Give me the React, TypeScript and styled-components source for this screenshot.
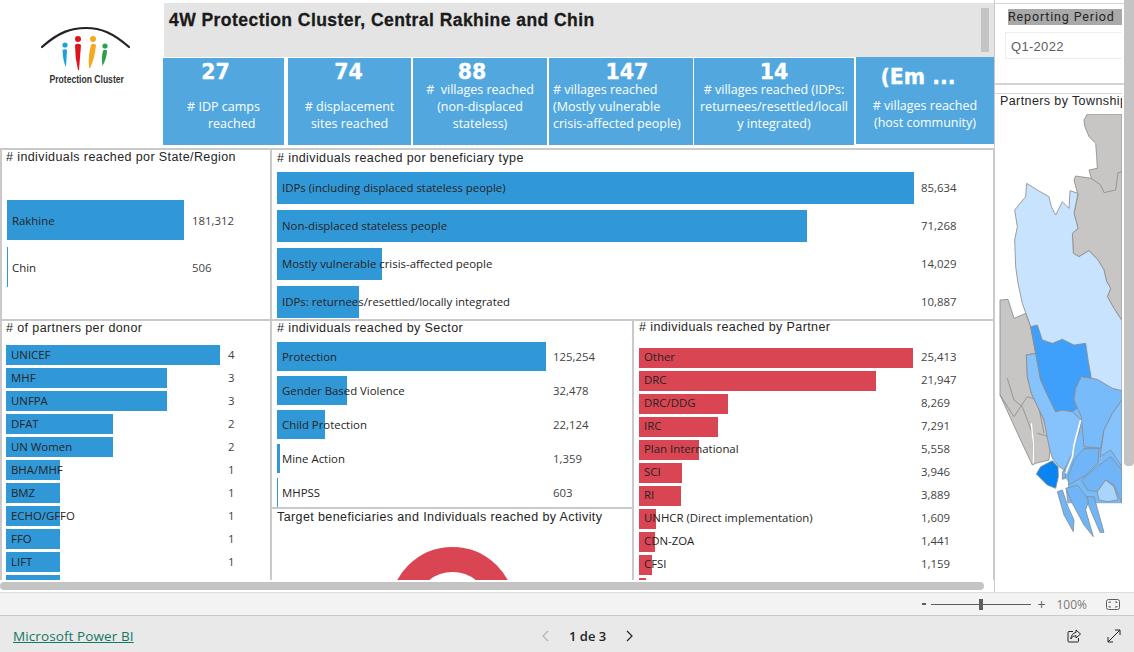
import styled, { createGlobalStyle } from 'styled-components'

const GlobalStyle = createGlobalStyle`
  html, body {
    margin: 0;
    padding: 0;
    background: #fff;
    overflow: hidden;
  }
`

const kpis = [
  { value: '27', label: '# IDP camps\n     reached', width: 121, gap: 0, shift: -8, drop: 0, left: false },
  { value: '74', label: '# displacement\nsites reached', width: 123, gap: 4, shift: -1, drop: 0, left: false },
  { value: '88', label: '#  villages reached\n(non-displaced\nstateless)', width: 134, gap: 2, shift: -8, drop: 0, left: false },
  { value: '147', label: '# villages reached\n(Mostly vulnerable\ncrisis-affected people)', width: 144, gap: 2, shift: 6, drop: 0, left: true },
  { value: '14', label: '# villages reached (IDPs:\nreturnees/resettled/locall\ny integrated)', width: 160, gap: 1, shift: 0, drop: 0, left: false },
  { value: '(Em ...', label: '# villages reached\n(host community)', width: 138, gap: 2, shift: -7, drop: 6, left: false },
]

const regionRows = [
  { name: 'Rakhine', value: '181,312', pct: 177 },
  { name: 'Chin', value: '506', pct: 1 },
]
const typeRows = [
  { name: 'IDPs (including displaced stateless people)', value: '85,634', pct: 637 },
  { name: 'Non-displaced stateless people', value: '71,268', pct: 530 },
  { name: 'Mostly vulnerable crisis-affected people', value: '14,029', pct: 105 },
  { name: 'IDPs: returnees/resettled/locally integrated', value: '10,887', pct: 82 },
]
const donorRows = [
  { name: 'UNICEF', value: '4', pct: 214 },
  { name: 'MHF', value: '3', pct: 161 },
  { name: 'UNFPA', value: '3', pct: 161 },
  { name: 'DFAT', value: '2', pct: 107 },
  { name: 'UN Women', value: '2', pct: 107 },
  { name: 'BHA/MHF', value: '1', pct: 54 },
  { name: 'BMZ', value: '1', pct: 54 },
  { name: 'ECHO/GFFO', value: '1', pct: 54 },
  { name: 'FFO', value: '1', pct: 54 },
  { name: 'LIFT', value: '1', pct: 54 },
  { name: '', value: '', pct: 54 },
]
const sectorRows = [
  { name: 'Protection', value: '125,254', pct: 269 },
  { name: 'Gender Based Violence', value: '32,478', pct: 70 },
  { name: 'Child Protection', value: '22,124', pct: 48 },
  { name: 'Mine Action', value: '1,359', pct: 3 },
  { name: 'MHPSS', value: '603', pct: 1 },
]
const partnerRows = [
  { name: 'Other', value: '25,413', pct: 274 },
  { name: 'DRC', value: '21,947', pct: 237 },
  { name: 'DRC/DDG', value: '8,269', pct: 89 },
  { name: 'IRC', value: '7,291', pct: 79 },
  { name: 'Plan International', value: '5,558', pct: 60 },
  { name: 'SCI', value: '3,946', pct: 43 },
  { name: 'RI', value: '3,889', pct: 42 },
  { name: 'UNHCR (Direct implementation)', value: '1,609', pct: 17 },
  { name: 'CDN-ZOA', value: '1,441', pct: 16 },
  { name: 'CFSI', value: '1,159', pct: 13 },
  { name: '', value: '', pct: 7 },
]

type Row = { name: string; value: string; pct: number }

const BarChart = ({
  rows,
  color,
  barHeight,
  gap,
  valueAt,
  lift = 0,
}: {
  rows: Row[]
  color: string
  barHeight: number
  gap: number
  valueAt: number
  lift?: number
}) => (
  <ChartRows $gap={gap}>
    {rows.map((row, i) => (
      <ChartRow key={i} $height={barHeight} $valueAt={valueAt} $lift={lift}>
        <Bar $color={color} style={{ width: row.pct }} />
        <BarLabel>{row.name}</BarLabel>
        <BarValue>{row.value}</BarValue>
      </ChartRow>
    ))}
  </ChartRows>
)

const RakhineMap = () => (
  <MapSvg viewBox="12 42 372 1404">
    <g stroke="#8b8b8b" strokeWidth="2.5" strokeLinejoin="round">
      <path
        fill="#c8c6c4"
        d="M280 42L270 60 272 78 285 110 305 130 308 170 310 205 285 210 292 235 245 228 240 240 252 285 240 340 252 385 235 400 238 460 255 470 285 452 312 480 330 510 338 545 350 565 340 590 360 625 384 662V42Z"
      />
      <path fill="none" d="M292 235L320 255 330 278 365 270 372 218 384 215" />
      <path
        fill="#c7e3fe"
        d="M98 250L130 270 165 290 172 320 185 345 205 305 225 325 228 272 252 280 240 340 252 385 235 400 238 460 255 470 285 452 312 480 330 510 338 545 350 565 340 590 360 625 384 662V880H100L110 680 85 610 72 550 65 500 62 420 70 380 62 330 95 290Z"
      />
      <path
        fill="#c8c6c4"
        d="M18 600L42 598 60 655 95 640 110 680 125 760 97 765 100 830 112 880 150 960 170 1030 165 1080 125 1090 115 1095 75 1010 18 885Z"
      />
      <path fill="none" d="M18 885L60 950 100 890 130 900 150 1000M40 835L60 900 85 920 115 1000 118 1090M130 1000L165 1010" />
      <path fill="#78bbfa" d="M240 900L384 880V1210H222L210 1110Z" />
      <path
        fill="#86c2fb"
        d="M97 765L125 760 140 840 185 935 205 930 235 935 262 960 255 1000 240 1030 235 1060 210 1110 195 1100 175 1075 165 1040 150 960 112 880 100 830Z"
      />
      <path
        fill="#3fa0fb"
        d="M110 680L130 675 145 720 175 730 205 718 240 735 275 730 283 785 292 835 262 830 245 865 240 900 250 925 235 935 205 930 185 935 160 885 140 840 125 760Z"
      />
      <path
        fill="#78bbfa"
        d="M262 830L310 838 355 865 384 872V900L355 940 330 990 320 1045 270 1040 262 950 240 900 245 865Z"
      />
      <path fill="#86c2fb" d="M384 900L355 940 330 990 318 1070 350 1050 384 1100Z" />
      <path fill="#6fb5f8" d="M270 1045L315 1045 312 1090 275 1125 225 1155 222 1130 240 1080Z" />
      <path
        fill="#6fb5f8"
        d="M262 1140L310 1100 350 1070 384 1110V1210L360 1155 335 1140 310 1175 280 1170Z"
      />
      <path fill="#a9d5fd" d="M310 1175L335 1140 360 1160 372 1200 340 1205 315 1200Z" />
    </g>
    <path fill="#fff" d="M195 1130L210 1125 222 1145 222 1170 200 1175 188 1165Z" />
    <path fill="#fff" d="M222 1210H384V1446H222Z" />
    <g stroke="#8b8b8b" strokeWidth="2.5" strokeLinejoin="round">
      <path fill="#6fb5f8" d="M190 1175L205 1170 222 1220 240 1260 238 1295 210 1245Z" />
      <path fill="#6fb5f8" d="M215 1165L250 1155 285 1200 275 1230 298 1310 270 1275 235 1210Z" />
      <path fill="#6fb5f8" d="M280 1190L300 1190 330 1297 318 1297 285 1220Z" />
      <path fill="#6fb5f8" d="M205 1115L215 1110 215 1135 205 1138Z" />
      <path fill="#0a84ef" d="M127 1122L140 1100 175 1082 192 1100 193 1130 185 1165 160 1155Z" />
    </g>
    <path fill="none" stroke="#fff" strokeWidth="5" d="M260 960L240 1035 235 1070 215 1120" />
    <path fill="none" stroke="#fff" strokeWidth="4" d="M112 970L118 1030 118 1090" />
  </MapSvg>
)

const App = () => (
  <>
    <GlobalStyle />
    <Page>
      <Report>
        <MainColumn>
          <Header>
            <LogoBox>
              <svg width="92" height="44" viewBox="0 0 92 44">
                <path d="M1 21C18 6 30 2 45 2S72 7 88 21" fill="none" stroke="#222" strokeWidth="2.2" strokeLinecap="round" />
                <circle cx="24" cy="19" r="2.6" fill="#1da1dc" />
                <path d="M21.500 24Q24 22.500 26 24L25 41Q22 36 21.500 24Z" fill="#1da1dc" />
                <circle cx="37" cy="13" r="3" fill="#e0121b" />
                <path d="M34 19Q37 16.500 40 19L38 44H37Q34 32 34 19Z" fill="#e0121b" />
                <circle cx="52" cy="13" r="3" fill="#f5a922" />
                <path d="M50 19Q53 16.500 55 19Q54 32 49 42H48Q47 30 50 19Z" fill="#f5a922" />
                <circle cx="64" cy="20" r="2.6" fill="#2ba24a" />
                <path d="M62 24.500Q64 23 66 24.500Q66 32 61.500 40Q60 32 62 24.500Z" fill="#2ba24a" />
              </svg>
              <LogoText>Protection Cluster</LogoText>
            </LogoBox>
            <HeaderBody>
              <TitleBar>
                <Title>4W Protection Cluster, Central Rakhine and Chin</Title>
                <TitleScroll />
              </TitleBar>
              <KpiRow>
                {kpis.map((kpi) => (
                  <KpiCard key={kpi.label} $width={kpi.width} $gap={kpi.gap} $lift={kpi.drop > 0}>
                    <KpiValue $shift={kpi.shift} $drop={kpi.drop}>{kpi.value}</KpiValue>
                    <KpiLabel $left={kpi.left}>{kpi.label}</KpiLabel>
                  </KpiCard>
                ))}
              </KpiRow>
            </HeaderBody>
          </Header>
          <Panels>
            <RegionPanel>
              <PanelTitle $top={0} $left={4}>
                # individuals reached por State/Region
              </PanelTitle>
              <RegionChart>
                <BarChart rows={regionRows} color="#3198d8" barHeight={40} gap={7} valueAt={185} />
              </RegionChart>
            </RegionPanel>
            <TypePanel>
              <PanelTitle $top={1} $left={5}># individuals reached por beneficiary type</PanelTitle>
              <TypeChart>
                <BarChart rows={typeRows} color="#3198d8" barHeight={32} gap={6} valueAt={644} lift={2} />
              </TypeChart>
            </TypePanel>
            <DonorPanel>
              <PanelTitle $top={0} $left={4}># of partners per donor</PanelTitle>
              <DonorChart>
                <BarChart rows={donorRows} color="#3198d8" barHeight={20} gap={3} valueAt={222} lift={1} />
              </DonorChart>
            </DonorPanel>
            <SectorPanel>
              <PanelTitle $top={0} $left={5}># individuals reached by Sector</PanelTitle>
              <SectorChart>
                <BarChart rows={sectorRows} color="#3198d8" barHeight={29} gap={5} valueAt={276} />
              </SectorChart>
            </SectorPanel>
            <TargetPanel>
              <PanelTitle $top={1} $left={5}>Target beneficiaries and Individuals reached by Activity</PanelTitle>
              <Donut />
            </TargetPanel>
            <PartnerPanel>
              <PanelTitle $top={-1} $left={5}># individuals reached by Partner</PanelTitle>
              <PartnerChart>
                <BarChart rows={partnerRows} color="#d94553" barHeight={20} gap={3} valueAt={282} lift={3} />
              </PartnerChart>
            </PartnerPanel>
          </Panels>
        </MainColumn>
        <Sidebar>
          <SlicerPanel>
            <SlicerTitle>Reporting Period</SlicerTitle>
            <SlicerBox>Q1-2022</SlicerBox>
          </SlicerPanel>
          <MapPanel>
            <MapTitle>Partners by Township</MapTitle>
            <RakhineMap />
          </MapPanel>
          <SideScroll />
        </Sidebar>
        <BottomScroll />
      </Report>
      <ZoomBar>
        <ZoomMinus />
        <ZoomTrack>
          <ZoomThumb />
        </ZoomTrack>
        <ZoomPlus>+</ZoomPlus>
        <ZoomValue>100%</ZoomValue>
        <svg width="14" height="11" viewBox="0 0 14 11">
          <rect x="0.5" y="0.5" width="13" height="10" rx="2" fill="none" stroke="#605e5c" />
          <path d="M3 4V3H5M9 3H11V4M11 7V8H9M5 8H3V7" fill="none" stroke="#605e5c" />
        </svg>
      </ZoomBar>
      <Footer>
        <BrandLink>Microsoft Power BI</BrandLink>
        <Pager>
          <svg width="10" height="12" viewBox="0 0 10 12">
            <path d="M7 1L2 6L7 11" fill="none" stroke="#b5b3b1" strokeWidth="1.2" />
          </svg>
          <PageText>1 de 3</PageText>
          <svg width="10" height="12" viewBox="0 0 10 12">
            <path d="M3 1L8 6L3 11" fill="none" stroke="#252423" strokeWidth="1.2" />
          </svg>
        </Pager>
        <FooterIcons>
          <svg width="14" height="14" viewBox="0 0 14 14">
            <path d="M6 2.500H2A1 1 0 0 0 1 3.500V12A1 1 0 0 0 2 13H10.500A1 1 0 0 0 11.500 12V9" fill="none" stroke="#252423" />
            <path d="M9 1L13.500 5 9 9V6.800C6.500 6.800 4.800 7.800 3.800 10 4 6.500 6 4 9 3.400Z" fill="none" stroke="#252423" />
          </svg>
          <svg width="14" height="14" viewBox="0 0 14 14">
            <path d="M1 13L13 1M8 1H13V6M1 8V13H6" fill="none" stroke="#252423" />
          </svg>
        </FooterIcons>
      </Footer>
    </Page>
  </>
)

export default App

const Page = styled.div`
  width: 1134px;
  height: 652px;
  display: flex;
  flex-direction: column;
  overflow: hidden;
  font-family: 'Open Sans', 'Noto Sans', sans-serif;
  color: #333;
`

const Report = styled.div`
  position: relative;
  height: 592px;
  display: flex;
  overflow: hidden;
  background: #fff;
`

const MainColumn = styled.div`
  width: 994px;
  height: 580px;
  flex-shrink: 0;
  display: flex;
  flex-direction: column;
  overflow: hidden;
`

const Header = styled.div`
  height: 148px;
  flex-shrink: 0;
  display: flex;
`

const LogoBox = styled.div`
  width: 163px;
  flex-shrink: 0;
  display: flex;
  flex-direction: column;
  align-items: center;
  padding-top: 26px;
  padding-left: 10px;
  box-sizing: border-box;
`

const LogoText = styled.div`
  margin-top: 3px;
  font-family: 'Liberation Sans', Arial, sans-serif;
  font-size: 11px;
  font-weight: 700;
  line-height: 12px;
  color: #333;
  white-space: nowrap;
  transform: scaleX(0.78);
`

const HeaderBody = styled.div`
  flex: 1;
  padding-top: 3px;
  display: flex;
  flex-direction: column;
`

const TitleBar = styled.div`
  height: 54px;
  margin-left: 1px;
  background: #e4e4e4;
  position: relative;
  padding: 7px 5px;
  box-sizing: border-box;
`

const Title = styled.div`
  font-family: 'Liberation Sans', Arial, sans-serif;
  font-size: 17.5px;
  font-weight: 700;
  line-height: 20px;
  color: #1a1a1a;
  letter-spacing: 0.45px;
  -webkit-text-stroke: 0.3px #1a1a1a;
`

const TitleScroll = styled.div`
  position: absolute;
  right: 5px;
  top: 5px;
  width: 8px;
  height: 44px;
  background: #c4c4c4;
`

const KpiRow = styled.div`
  display: flex;
  height: 87px;
  margin-top: 1px;
`

const KpiCard = styled.div<{ $width: number; $gap: number; $lift: boolean }>`
  width: ${(p) => p.$width}px;
  margin-left: ${(p) => p.$gap}px;
  margin-top: ${(p) => (p.$lift ? -1 : 0)}px;
  margin-bottom: ${(p) => (p.$lift ? 1 : 0)}px;
  background: #52a8de;
  color: #fff;
  text-align: center;
  display: flex;
  flex-direction: column;
  align-items: center;
  box-sizing: border-box;
  padding-top: 5px;
`

const KpiValue = styled.div<{ $shift: number; $drop: number }>`
  font-family: 'DejaVu Sans', Verdana, sans-serif;
  font-weight: 700;
  font-size: 20.5px;
  line-height: 18px;
  -webkit-text-stroke: 0.3px #fff;
  margin-top: ${(p) => p.$drop}px;
  transform: translateX(${(p) => p.$shift}px);
  white-space: nowrap;
`

const KpiLabel = styled.div<{ $left: boolean }>`
  font-size: 12.5px;
  line-height: 17px;
  white-space: pre;
  margin-top: auto;
  margin-bottom: 13px;
  text-align: ${(p) => (p.$left ? 'left' : 'center')};
  align-self: ${(p) => (p.$left ? 'flex-start' : 'center')};
  padding-left: ${(p) => (p.$left ? 4 : 0)}px;
`

const Panels = styled.div`
  display: grid;
  grid-template-columns: 270px 362px 361px;
  grid-template-rows: 171px 188px 1fr;
  flex: 1;
  min-height: 0;
`

const PanelBase = styled.section`
  border: 2px solid #c9c9c9;
  margin-right: -2px;
  margin-bottom: -2px;
  box-sizing: border-box;
  background: #fff;
  overflow: hidden;
  min-width: 0;
  min-height: 0;
`

const RegionPanel = styled(PanelBase)`
  grid-column: 1;
  grid-row: 1;
`

const TypePanel = styled(PanelBase)`
  grid-column: 2 / 4;
  grid-row: 1;
`

const DonorPanel = styled(PanelBase)`
  grid-column: 1;
  grid-row: 2 / 4;
`

const SectorPanel = styled(PanelBase)`
  grid-column: 2;
  grid-row: 2;
`

const TargetPanel = styled(PanelBase)`
  grid-column: 2;
  grid-row: 3;
  display: flex;
  flex-direction: column;
  align-items: center;
`

const PartnerPanel = styled(PanelBase)`
  grid-column: 3;
  grid-row: 2 / 4;
`

const PanelTitle = styled.h3<{ $top: number; $left: number }>`
  margin: ${(p) => p.$top}px 0 0;
  padding: 0 0 0 ${(p) => p.$left}px;
  font-family: 'Liberation Sans', Arial, sans-serif;
  font-size: 12.5px;
  font-weight: 400;
  line-height: 14px;
  letter-spacing: 0.4px;
  color: #252423;
  white-space: nowrap;
  align-self: flex-start;
`

const RegionChart = styled.div`
  padding: 36px 0 0 5px;
`

const TypeChart = styled.div`
  padding: 7px 0 0 5px;
`

const DonorChart = styled.div`
  padding: 10px 0 0 4px;
`

const SectorChart = styled.div`
  padding: 7px 0 0 5px;
`

const PartnerChart = styled.div`
  padding: 14px 0 0 5px;
`

const ChartRows = styled.div<{ $gap: number }>`
  display: flex;
  flex-direction: column;
  gap: ${(p) => p.$gap}px;
`

const ChartRow = styled.div<{ $height: number; $valueAt: number; $lift: number }>`
  position: relative;
  height: ${(p) => p.$height}px;
  display: grid;
  grid-template-columns: ${(p) => p.$valueAt}px auto;
  align-items: center;
  padding-bottom: ${(p) => p.$lift}px;
  box-sizing: border-box;
  font-size: 11.4px;
  color: #252423;
`

const Bar = styled.div<{ $color: string }>`
  position: absolute;
  left: 0;
  top: 0;
  bottom: 0;
  background: ${(p) => p.$color};
`

const BarLabel = styled.span`
  position: relative;
  padding-left: 5px;
  white-space: nowrap;
`

const BarValue = styled.span`
  color: #444;
  white-space: nowrap;
`

const Donut = styled.div`
  width: 125px;
  height: 125px;
  margin-top: 23px;
  border: 25px solid #d94553;
  border-radius: 50%;
  box-sizing: border-box;
  flex-shrink: 0;
`

const Sidebar = styled.aside`
  flex: 1;
  position: relative;
  display: flex;
  flex-direction: column;
  border-left: 1px solid #c9c9c9;
  padding-top: 3px;
  box-sizing: border-box;
`

const SlicerPanel = styled.div`
  height: 82px;
  border-top: 1px solid #d4d4d4;
  border-bottom: 2px solid #d4d4d4;
  box-sizing: border-box;
  padding: 5px 0 0 10px;
`

const SlicerTitle = styled.div`
  width: 114px;
  height: 16px;
  margin-left: 3px;
  background: #a9a9a9;
  font-family: 'Roboto', 'Open Sans', sans-serif;
  font-size: 12.5px;
  line-height: 16px;
  letter-spacing: 0.85px;
  color: #252423;
  white-space: nowrap;
`

const SlicerBox = styled.div`
  width: 117px;
  height: 27px;
  margin-top: 7px;
  border: 1px solid #eee;
  border-right: none;
  box-sizing: border-box;
  font-family: 'Liberation Sans', Arial, sans-serif;
  font-size: 13px;
  line-height: 28px;
  letter-spacing: 0.3px;
  padding-left: 5px;
  color: #605e5c;
`

const MapPanel = styled.div`
  margin-top: 8px;
  border-top: 1px solid #d4d4d4;
  flex: 1;
  width: 127px;
  overflow: hidden;
  display: flex;
  flex-direction: column;
`

const MapTitle = styled.div`
  height: 20px;
  padding-left: 5px;
  font-family: 'Liberation Sans', Arial, sans-serif;
  font-size: 12.5px;
  line-height: 15px;
  letter-spacing: 0.4px;
  color: #252423;
  white-space: nowrap;
  flex-shrink: 0;
`

const MapSvg = styled.svg`
  display: block;
  width: 124px;
  height: 468px;
  margin-left: 3px;
  flex-shrink: 0;
`

const SideScroll = styled.div`
  position: absolute;
  top: 0;
  right: 0;
  width: 10px;
  height: 466px;
  background: #c4c4c4;
  border-radius: 0 0 4px 4px;
`

const BottomScroll = styled.div`
  position: absolute;
  left: 0;
  bottom: 2px;
  width: 984px;
  height: 8px;
  background: #c4c4c4;
  border-radius: 4px;
`

const ZoomBar = styled.div`
  height: 24px;
  background: #f3f3f3;
  border-top: 1px solid #dedede;
  border-bottom: 1px solid #c9c9c9;
  box-sizing: border-box;
  display: flex;
  align-items: center;
  justify-content: flex-end;
  padding-right: 14px;
  font-family: 'Open Sans', sans-serif;
  font-size: 12px;
  color: #605e5c;
`

const ZoomMinus = styled.span`
  width: 4px;
  height: 2px;
  margin-right: 5px;
  background: #605e5c;
`

const ZoomTrack = styled.div`
  position: relative;
  width: 100px;
  height: 1px;
  background: #605e5c;
`

const ZoomThumb = styled.div`
  position: absolute;
  left: 48px;
  top: -5px;
  width: 4px;
  height: 11px;
  background: #605e5c;
`

const ZoomPlus = styled.span`
  margin-left: 6px;
  font-size: 14px;
  width: 8px;
`

const ZoomValue = styled.span`
  margin: 0 19px 0 11px;
  color: #7a7876;
`

const Footer = styled.footer`
  flex: 1;
  background: #e9e9e9;
  display: grid;
  grid-template-columns: 528px auto 1fr;
  align-items: center;
  padding: 3px 13px 0 13px;
  box-sizing: border-box;
`

const BrandLink = styled.a`
  font-family: 'Open Sans', sans-serif;
  font-size: 13.5px;
  letter-spacing: 0.1px;
  color: #117865;
  text-decoration: underline;
  cursor: pointer;
`

const Pager = styled.div`
  display: flex;
  align-items: center;
  gap: 18px;
`

const PageText = styled.span`
  font-size: 13px;
  font-weight: 600;
  color: #252423;
`

const FooterIcons = styled.div`
  display: flex;
  justify-content: flex-end;
  gap: 26px;
`
